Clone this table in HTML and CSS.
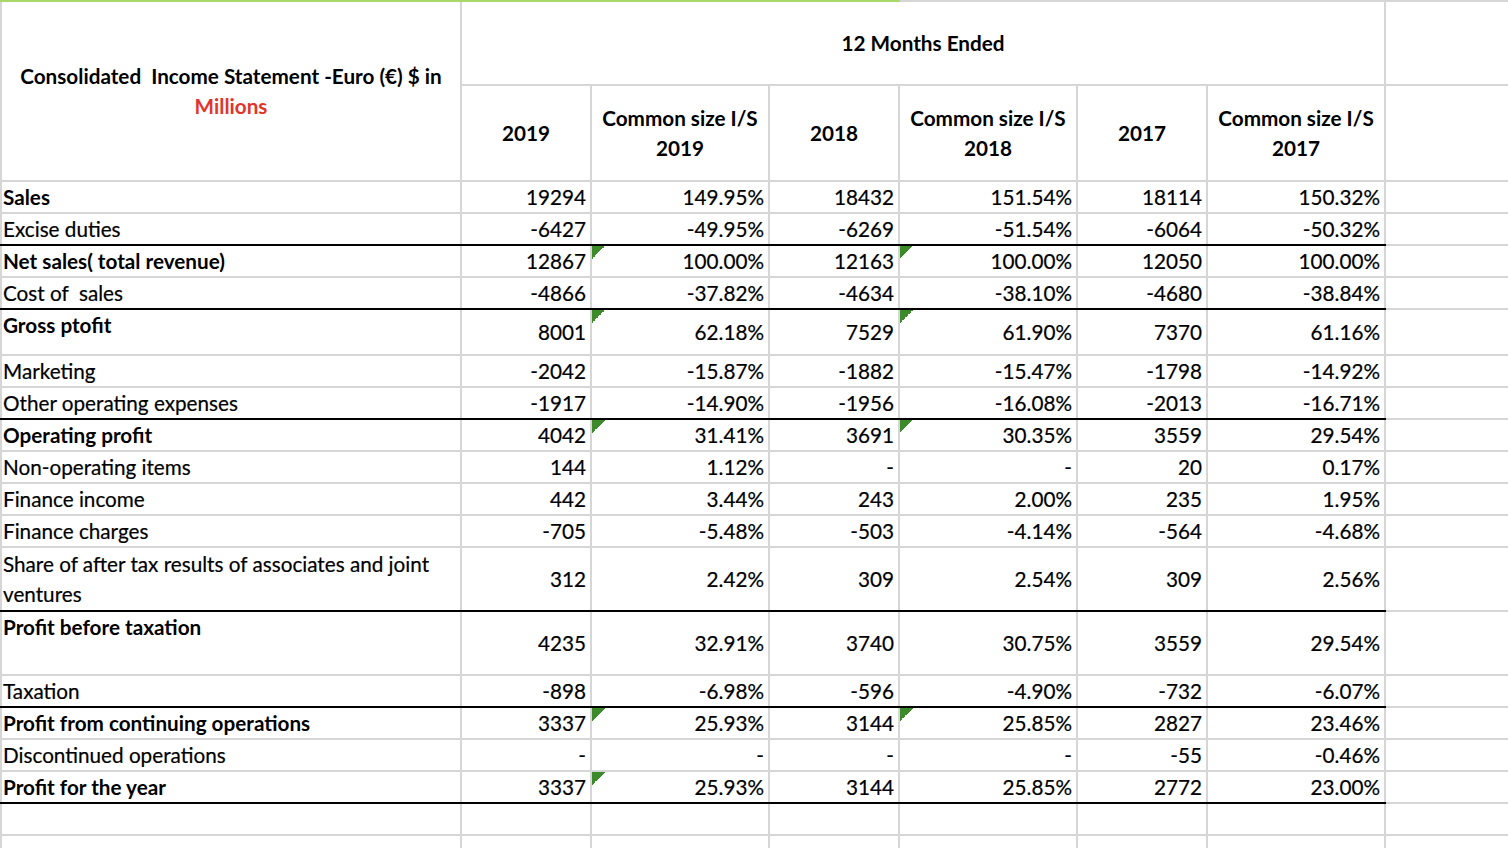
FILE: index.html
```html
<!DOCTYPE html>
<html lang="en">
<head>
<meta charset="utf-8">
<title>Consolidated Income Statement</title>
<link rel="stylesheet" href="styles.css">
</head>
<body>
<div class="topline"></div>
<table class="sheet">
  <colgroup>
    <col class="c-label"><col class="c-num"><col class="c-pct"><col class="c-num"><col class="c-pct"><col class="c-num"><col class="c-pct"><col class="c-extra">
  </colgroup>
  <tr class="h1">
    <td class="title" rowspan="2">Consolidated&nbsp; Income Statement -Euro (€) $ in<br><span class="red">Millions</span></td>
    <td class="hc" colspan="6">12 Months Ended</td>
    <td></td>
  </tr>
  <tr class="h2">
    <td class="hc">2019</td>
    <td class="hc">Common size I/S<br>2019</td>
    <td class="hc">2018</td>
    <td class="hc">Common size I/S<br>2018</td>
    <td class="hc">2017</td>
    <td class="hc">Common size I/S<br>2017</td>
    <td></td>
  </tr>
  <tr class="b">
    <td class="lbl">Sales</td><td>19294</td><td>149.95%</td><td>18432</td><td>151.54%</td><td>18114</td><td>150.32%</td><td></td>
  </tr>
  <tr class="k">
    <td class="lbl">Excise duties</td><td>-6427</td><td>-49.95%</td><td>-6269</td><td>-51.54%</td><td>-6064</td><td>-50.32%</td><td></td>
  </tr>
  <tr class="b">
    <td class="lbl">Net sales( total revenue)</td><td>12867</td><td class="tri">100.00%</td><td>12163</td><td class="tri">100.00%</td><td>12050</td><td>100.00%</td><td></td>
  </tr>
  <tr class="k">
    <td class="lbl">Cost of&nbsp; sales</td><td>-4866</td><td>-37.82%</td><td>-4634</td><td>-38.10%</td><td>-4680</td><td>-38.84%</td><td></td>
  </tr>
  <tr class="b r46">
    <td class="lbl top">Gross ptofit</td><td>8001</td><td class="tri">62.18%</td><td>7529</td><td class="tri">61.90%</td><td>7370</td><td>61.16%</td><td></td>
  </tr>
  <tr>
    <td class="lbl">Marketing</td><td>-2042</td><td>-15.87%</td><td>-1882</td><td>-15.47%</td><td>-1798</td><td>-14.92%</td><td></td>
  </tr>
  <tr class="k">
    <td class="lbl">Other operating expenses</td><td>-1917</td><td>-14.90%</td><td>-1956</td><td>-16.08%</td><td>-2013</td><td>-16.71%</td><td></td>
  </tr>
  <tr class="b">
    <td class="lbl">Operating profit</td><td>4042</td><td class="tri">31.41%</td><td>3691</td><td class="tri">30.35%</td><td>3559</td><td>29.54%</td><td></td>
  </tr>
  <tr>
    <td class="lbl">Non-operating items</td><td>144</td><td>1.12%</td><td>-</td><td>-</td><td>20</td><td>0.17%</td><td></td>
  </tr>
  <tr>
    <td class="lbl">Finance income</td><td>442</td><td>3.44%</td><td>243</td><td>2.00%</td><td>235</td><td>1.95%</td><td></td>
  </tr>
  <tr>
    <td class="lbl">Finance charges</td><td>-705</td><td>-5.48%</td><td>-503</td><td>-4.14%</td><td>-564</td><td>-4.68%</td><td></td>
  </tr>
  <tr class="k r64">
    <td class="lbl wrap">Share of after tax results of associates and joint<br>ventures</td><td>312</td><td>2.42%</td><td>309</td><td>2.54%</td><td>309</td><td>2.56%</td><td></td>
  </tr>
  <tr class="b r64">
    <td class="lbl top">Profit before taxation</td><td>4235</td><td>32.91%</td><td>3740</td><td>30.75%</td><td>3559</td><td>29.54%</td><td></td>
  </tr>
  <tr class="k">
    <td class="lbl">Taxation</td><td>-898</td><td>-6.98%</td><td>-596</td><td>-4.90%</td><td>-732</td><td>-6.07%</td><td></td>
  </tr>
  <tr class="b">
    <td class="lbl">Profit from continuing operations</td><td>3337</td><td class="tri">25.93%</td><td>3144</td><td class="tri">25.85%</td><td>2827</td><td>23.46%</td><td></td>
  </tr>
  <tr>
    <td class="lbl">Discontinued operations</td><td>-</td><td>-</td><td>-</td><td>-</td><td>-55</td><td>-0.46%</td><td></td>
  </tr>
  <tr class="b k">
    <td class="lbl">Profit for the year</td><td>3337</td><td class="tri">25.93%</td><td>3144</td><td>25.85%</td><td>2772</td><td>23.00%</td><td></td>
  </tr>
  <tr class="empty">
    <td></td><td></td><td></td><td></td><td></td><td></td><td></td><td></td>
  </tr>
  <tr class="empty">
    <td></td><td></td><td></td><td></td><td></td><td></td><td></td><td></td>
  </tr>
</table>
</body>
</html>
```

FILE: styles.css
```css
html, body {
  margin: 0;
  padding: 0;
  background: #ffffff;
}

body {
  font-family: Lato, "Open Sans", "Liberation Sans", sans-serif;
  color: #000000;
  overflow: hidden;
}

.topline {
  height: 2px;
  background: linear-gradient(to right, #a9d86a 0, #a9d86a 900px, #d6d6d6 900px, #d6d6d6 100%);
}

.sheet {
  border-collapse: collapse;
  table-layout: fixed;
  width: 1508px;
  font-size: 20.7px;
  -webkit-text-stroke: 0.2px #000000;
}

.c-label { width: 460px; }
.c-num { width: 130px; }
.c-pct { width: 178px; }
.c-extra { width: 124px; }

.sheet td {
  border: 2px solid #d6d6d6;
  padding: 0 4px 0 1px;
  line-height: 30px;
  height: 30px;
  text-align: right;
  vertical-align: middle;
  white-space: nowrap;
  overflow: hidden;
}

.sheet tr.h1 td {
  border-top: 0;
  height: 82px;
}

.sheet tr.h2 td {
  height: 94px;
}

.sheet td.title,
.sheet td.hc {
  text-align: center;
  font-weight: 700;
  padding: 0;
  -webkit-text-stroke: 0;
}

.red {
  color: #e3342b;
}

.sheet td.lbl {
  text-align: left;
}

.sheet tr.b td.lbl {
  font-weight: 700;
  -webkit-text-stroke: 0;
}

.sheet td.top {
  vertical-align: top;
}

.sheet tr.k td {
  border-bottom: 2px solid #000000;
}

.sheet tr.k td:last-child {
  border-bottom-color: #d6d6d6;
}

.sheet tr.r46 td {
  height: 44px;
}

.sheet tr.r64 td {
  height: 62px;
}

.sheet tr.empty td {
  height: 30px;
}

.sheet td.tri {
  background-image: linear-gradient(135deg, #3d8a2b 50%, transparent 50%);
  background-repeat: no-repeat;
  background-size: 13px 13px;
  background-position: 0 0;
}
```
